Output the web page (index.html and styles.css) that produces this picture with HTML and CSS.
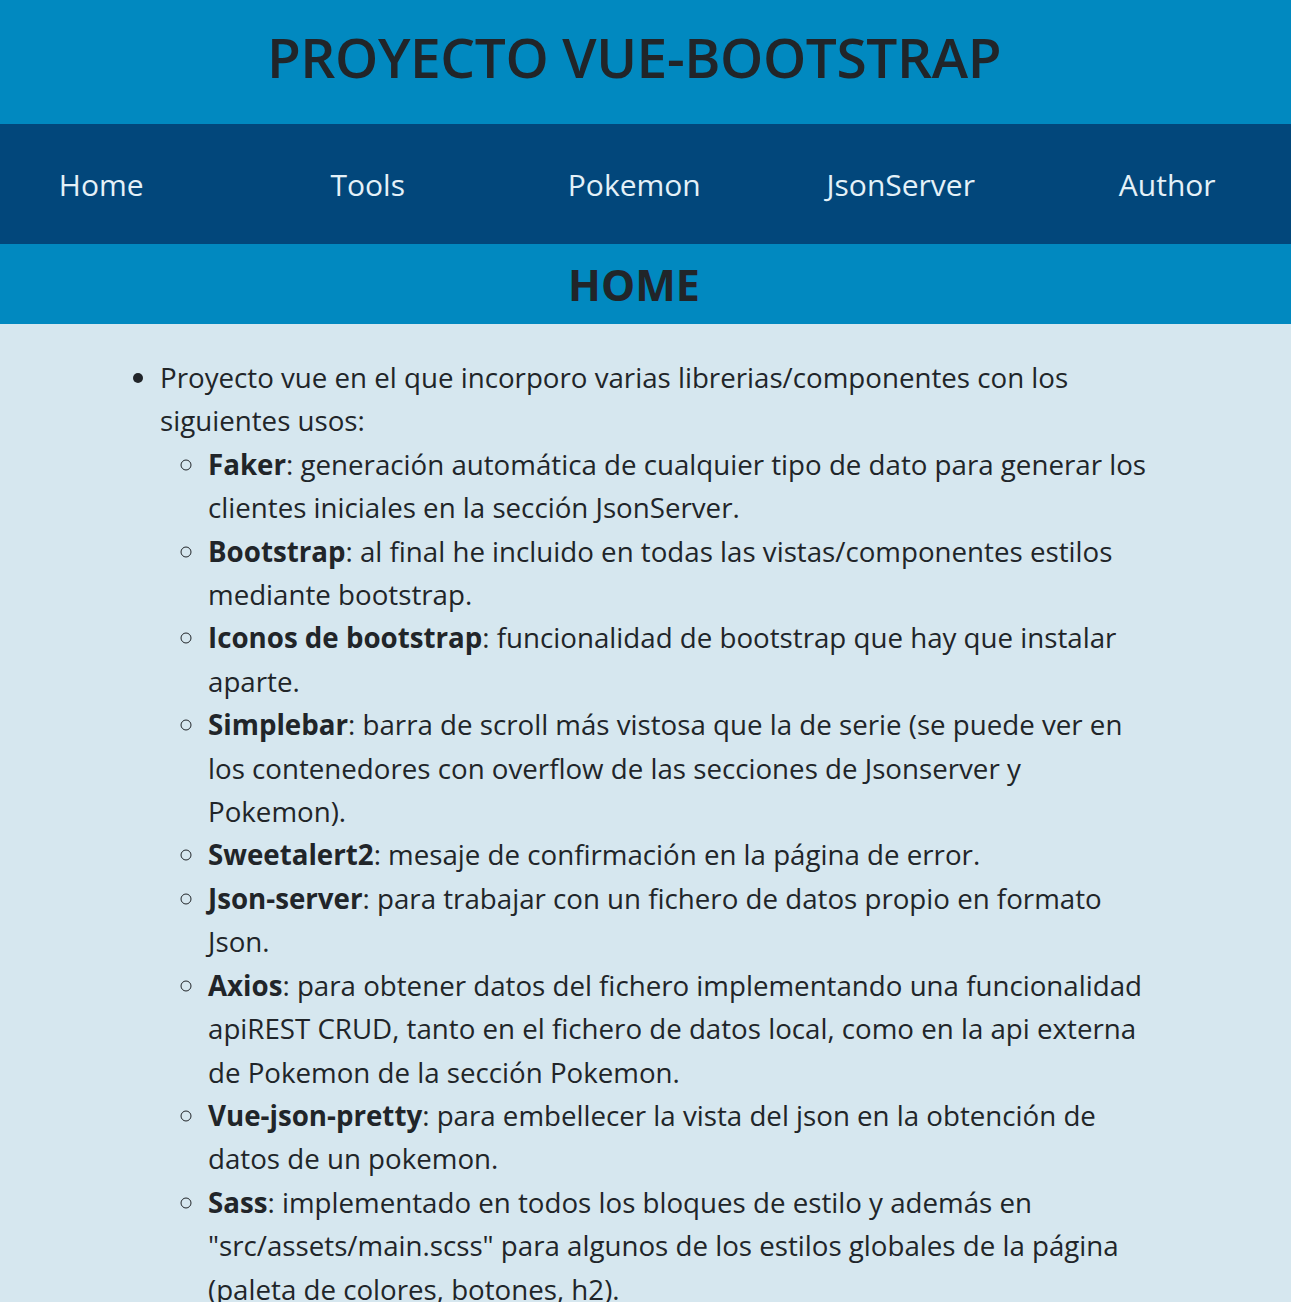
FILE: index.html
```html
<!DOCTYPE html>
<html lang="es">
<head>
<meta charset="utf-8">
<title>Proyecto Vue-Bootstrap</title>
<link rel="stylesheet" href="styles.css">
</head>
<body>
<header class="site-header">
  <h1 class="site-title">PROYECTO VUE-BOOTSTRAP</h1>
</header>
<nav class="main-nav">
  <ul class="nav-list">
    <li class="nav-item"><a class="nav-link" href="#">Home</a></li>
    <li class="nav-item"><a class="nav-link" href="#">Tools</a></li>
    <li class="nav-item"><a class="nav-link" href="#">Pokemon</a></li>
    <li class="nav-item"><a class="nav-link" href="#">JsonServer</a></li>
    <li class="nav-item"><a class="nav-link" href="#">Author</a></li>
  </ul>
</nav>
<section class="page-title">
  <h2 class="page-heading">HOME</h2>
</section>
<main class="content">
  <ul class="feature-list">
    <li>Proyecto vue en el que incorporo varias librerias/componentes con los siguientes usos:
      <ul class="sub-list">
        <li><strong>Faker</strong>: generación automática de cualquier tipo de dato para generar los clientes iniciales en la sección JsonServer.</li>
        <li><strong>Bootstrap</strong>: al final he incluido en todas las vistas/componentes estilos mediante bootstrap.</li>
        <li><strong>Iconos de bootstrap</strong>: funcionalidad de bootstrap que hay que instalar aparte.</li>
        <li><strong>Simplebar</strong>: barra de scroll más vistosa que la de serie (se puede ver en los contenedores con overflow de las secciones de Jsonserver y Pokemon).</li>
        <li><strong>Sweetalert2</strong>: mesaje de confirmación en la página de error.</li>
        <li><strong>Json-server</strong>: para trabajar con un fichero de datos propio en formato Json.</li>
        <li><strong>Axios</strong>: para obtener datos del fichero implementando una funcionalidad apiREST CRUD, tanto en el fichero de datos local, como en la api externa de Pokemon de la sección Pokemon.</li>
        <li><strong>Vue-json-pretty</strong>: para embellecer la vista del json en la obtención de datos de un pokemon.</li>
        <li><strong>Sass</strong>: implementado en todos los bloques de estilo y además en "src/assets/main.scss" para algunos de los estilos globales de la página (paleta de colores, botones, h2).</li>
      </ul>
    </li>
  </ul>
</main>
</body>
</html>
```
FILE: styles.css
```css
* { box-sizing: border-box; }
html, body { margin: 0; padding: 0; }
body {
  font-family: "Open Sans", "Noto Sans", sans-serif;
  color: #212529;
  background: #d6e7ef;
  overflow-x: hidden;
}
.site-header {
  background: #0189c0;
  height: 124px;
  display: flex;
  align-items: center;
  justify-content: center;
  padding: 0 23px 12px 0;
}
.site-title {
  margin: 0;
  font-size: 55px;
  font-weight: 600;
  letter-spacing: -0.4px;
  color: #212529;
}
.main-nav {
  background: #02477b;
  height: 120px;
  display: flex;
  align-items: center;
  overflow: hidden;
}
.nav-list {
  list-style: none;
  margin: 0 0 0 -32px;
  padding: 0;
  display: grid;
  grid-template-columns: repeat(5, 266.5px);
}
.nav-item { text-align: center; }
.nav-link {
  color: #e4f1f8;
  text-decoration: none;
  font-size: 30px;
  font-weight: 400;
}
.page-title {
  background: #0189c0;
  height: 80px;
  display: flex;
  align-items: center;
  justify-content: center;
  padding-right: 23px;
}
.page-heading {
  margin: 0;
  font-size: 43px;
  font-weight: 700;
  color: #212529;
}
.content {
  padding: 32px 134px 0 112px;
  font-size: 27.7px;
  line-height: 43.4px;
}
.feature-list {
  margin: 0;
  padding-left: 48px;
  list-style: disc;
}
.sub-list {
  margin: 0;
  padding-left: 48px;
  list-style: circle;
}
.sub-list strong {
  font-weight: 700;
}
```
